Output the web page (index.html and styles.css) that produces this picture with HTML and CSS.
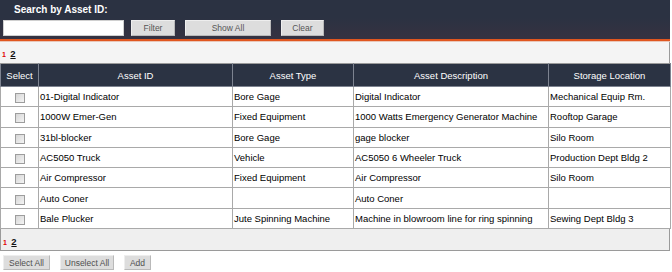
FILE: index.html
```html
<!DOCTYPE html>
<html lang="en">
<head>
  <meta charset="UTF-8">
  <title>Asset List</title>
  <link rel="stylesheet" href="styles.css">
</head>
<body>
  <div class="page">
    <div class="search-bar">
      <div class="search-title">Search by Asset ID:</div>
      <div class="search-row">
        <input type="text" class="search-input">
        <button class="btn btn-filter">Filter</button>
        <button class="btn btn-show">Show All</button>
        <button class="btn btn-clear">Clear</button>
      </div>
    </div>
    <div class="accent"></div>

    <div class="pager pager-top">
      <span class="page-current">1</span>
      <a href="#" class="page-link">2</a>
    </div>

    <table class="assets">
      <thead>
        <tr>
          <th class="col-select">Select</th>
          <th class="col-id">Asset ID</th>
          <th class="col-type">Asset Type</th>
          <th class="col-desc">Asset Description</th>
          <th class="col-loc">Storage Location</th>
        </tr>
      </thead>
      <tbody>
        <tr>
          <td class="check"><input type="checkbox"></td>
          <td>01-Digital Indicator</td>
          <td>Bore Gage</td>
          <td>Digital Indicator</td>
          <td>Mechanical Equip Rm.</td>
        </tr>
        <tr>
          <td class="check"><input type="checkbox"></td>
          <td>1000W Emer-Gen</td>
          <td>Fixed Equipment</td>
          <td>1000 Watts Emergency Generator Machine</td>
          <td>Rooftop Garage</td>
        </tr>
        <tr>
          <td class="check"><input type="checkbox"></td>
          <td>31bl-blocker</td>
          <td>Bore Gage</td>
          <td>gage blocker</td>
          <td>Silo Room</td>
        </tr>
        <tr>
          <td class="check"><input type="checkbox"></td>
          <td>AC5050 Truck</td>
          <td>Vehicle</td>
          <td>AC5050 6 Wheeler Truck</td>
          <td>Production Dept Bldg 2</td>
        </tr>
        <tr>
          <td class="check"><input type="checkbox"></td>
          <td>Air Compressor</td>
          <td>Fixed Equipment</td>
          <td>Air Compressor</td>
          <td>Silo Room</td>
        </tr>
        <tr>
          <td class="check"><input type="checkbox"></td>
          <td>Auto Coner</td>
          <td></td>
          <td>Auto Coner</td>
          <td></td>
        </tr>
        <tr>
          <td class="check"><input type="checkbox"></td>
          <td>Bale Plucker</td>
          <td>Jute Spinning Machine</td>
          <td>Machine in blowroom line for ring spinning</td>
          <td>Sewing Dept Bldg 3</td>
        </tr>
      </tbody>
    </table>

    <div class="pager pager-bottom">
      <span class="page-current">1</span>
      <a href="#" class="page-link">2</a>
    </div>

    <div class="actions">
      <button class="btn btn-select">Select All</button>
      <button class="btn btn-unselect">Unselect All</button>
      <button class="btn btn-add">Add</button>
    </div>
  </div>
</body>
</html>
```

FILE: styles.css
```css
* {
  margin: 0;
  padding: 0;
  box-sizing: border-box;
}

body {
  font-family: 'Liberation Sans', Arial, sans-serif;
  background: #ffffff;
  color: #000000;
}

.page {
  width: 670px;
}

.search-bar {
  height: 39px;
  padding: 3px 0 0 3px;
  background: linear-gradient(#2b3242 0%, #2b3242 45%, #363241 100%);
}

.search-title {
  padding-left: 11px;
  height: 17px;
  font-size: 10px;
  font-weight: bold;
  line-height: 13px;
  color: #ffffff;
}

.search-row {
  display: flex;
  align-items: center;
  gap: 10px;
}

.search-input {
  width: 121px;
  height: 16px;
  margin-right: -3px;
  border: 1px solid #d0d0d0;
  background: #ffffff;
}

.btn {
  height: 16px;
  font-family: 'Liberation Sans', Arial, sans-serif;
  font-size: 8.5px;
  color: #555555;
  background: #dddddd;
  border: 1px solid #b9b9b9;
  border-top-color: #eeeeee;
  border-left-color: #eeeeee;
  cursor: pointer;
}

.btn-filter { width: 44px; }
.btn-show { width: 86px; }
.btn-clear { width: 43px; }

.accent {
  height: 3px;
  background: #e0561f;
  border-bottom: 1px solid #e9c6b8;
}

.pager {
  background: #f4f4f4;
  border-right: 1px solid #9a9a9a;
  font-weight: bold;
  padding-left: 2px;
}

.pager-top {
  height: 21px;
  padding-top: 5px;
  line-height: 10px;
}

.pager-bottom {
  height: 22px;
  padding-top: 6px;
  line-height: 10px;
  border-left: 1px solid #9a9a9a;
  border-bottom: 1px solid #9a9a9a;
  background: #efefef;
}

.page-current {
  font-size: 7px;
  color: #e00000;
}

.page-link {
  font-size: 9.5px;
  color: #111111;
  text-decoration: underline;
}

.assets {
  width: 670px;
  border-collapse: collapse;
  table-layout: fixed;
  font-size: 9.5px;
}

.assets th {
  height: 23px;
  background: #2b3343;
  color: #ffffff;
  font-weight: normal;
  text-align: center;
  border: 1px solid #7d8390;
  border-top-color: #9a9a9a;
}

.col-select { width: 38px; }
.col-id { width: 194px; }
.col-type { width: 121px; }
.col-desc { width: 195px; }
.col-loc { width: 122px; }

.assets tbody tr {
  height: 20.3px;
}

.assets td {
  padding: 0 1px;
  border: 1px solid #a9a9a9;
  white-space: nowrap;
  overflow: hidden;
}

.assets td.check {
  text-align: center;
  padding: 0;
}

.check input {
  appearance: none;
  display: inline-block;
  width: 10px;
  height: 10px;
  margin-top: 3px;
  border: 1px solid #9d9d9d;
  background: linear-gradient(135deg, #d6d6d6, #f4f4f4);
  vertical-align: top;
}

.actions {
  display: flex;
  align-items: center;
  gap: 10px;
  padding: 4px 0 0 3px;
}

.actions .btn {
  height: 15px;
  color: #505050;
}

.btn-select { width: 47px; }
.btn-unselect { width: 54px; }
.btn-add { width: 27px; }
```
